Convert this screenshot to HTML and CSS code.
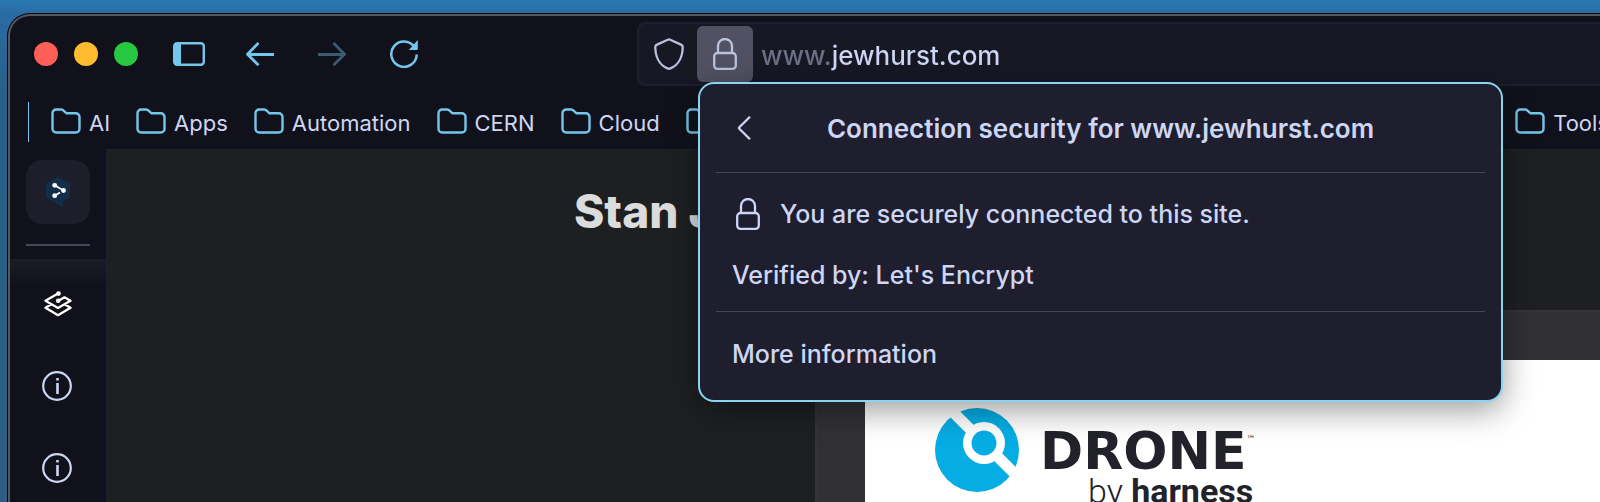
FILE: index.html
```html
<!DOCTYPE html>
<html lang="en">
<head>
<meta charset="utf-8">
<title>www.jewhurst.com</title>
<link rel="stylesheet" href="styles.css">
</head>
<body>
<svg class="symbols" aria-hidden="true">
  <symbol id="folder" viewBox="0 0 30 26"><path d="M1.500 5.200V20.800a3.700 3.700 0 0 0 3.700 3.700h19.600a3.700 3.700 0 0 0 3.700-3.700V9a3.700 3.700 0 0 0-3.700-3.700H15.500L12.600 2.600a3.500 3.500 0 0 0-2.400-1.100H5.200a3.700 3.700 0 0 0-3.700 3.700z" fill="none" stroke="currentColor" stroke-width="2.400"/></symbol>
  <symbol id="lock" viewBox="0 0 24 32"><path d="M5 14V8a7 7 0 0 1 14 0v6M4.500 15h15a3.300 3.300 0 0 1 3.300 3.300v9.200a3.300 3.300 0 0 1-3.300 3.300h-15a3.300 3.300 0 0 1-3.300-3.300v-9.200A3.300 3.300 0 0 1 4.500 15z" fill="none" stroke="currentColor" stroke-width="2.300"/></symbol>
  <symbol id="info" viewBox="0 0 30 30"><circle cx="15" cy="15" r="13.800" fill="none" stroke="currentColor" stroke-width="2.200"/><path d="M15.500 12v11M15.500 7v2.500" stroke="currentColor" stroke-width="2.600"/></symbol>
</svg>
<div class="window">
  <header class="toolbar">
    <div class="lights">
      <button class="light close" aria-label="Close"></button>
      <button class="light minimize" aria-label="Minimize"></button>
      <button class="light zoom" aria-label="Zoom"></button>
    </div>
    <nav class="controls" aria-label="Navigation">
      <button class="icon-button sidebar-toggle" aria-label="Toggle sidebar"><svg width="32" height="24" viewBox="0 0 32 24"><rect x="1.200" y="1.200" width="29.600" height="21.600" rx="3" fill="none" stroke="currentColor" stroke-width="2.400"/><path d="M2 2h6v20H2z" fill="currentColor"/></svg></button>
      <button class="icon-button" aria-label="Back"><svg width="28" height="24" viewBox="0 0 28 24"><path d="M28 12.500H2M12.500 1L1.500 12.200l11 11" fill="none" stroke="currentColor" stroke-width="2.800"/></svg></button>
      <button class="icon-button" aria-label="Forward" disabled><svg width="28" height="24" viewBox="0 0 28 24"><path d="M0 12.500h26M15.500 1l11 11.200-11 11" fill="none" stroke="currentColor" stroke-width="2.800"/></svg></button>
      <button class="icon-button" aria-label="Reload"><svg width="28" height="28" viewBox="0 0 28 28"><path d="M24.500 7A12.700 12.700 0 1 0 26.700 14.500" fill="none" stroke="currentColor" stroke-width="2.500"/><path d="M27.800 0v8.500a1.500 1.500 0 0 1-1.500 1.500h-7.500z" fill="currentColor"/></svg></button>
    </nav>
    <div class="address">
      <button class="shield" aria-label="Tracking protection"><svg width="30" height="32" viewBox="0 0 30 32"><path d="M13.800 1.700L3 6.600A2.700 2.700 0 0 0 1.300 9.200C1.400 18 5 27 13.500 30.400a3.500 3.500 0 0 0 3 0C25 27 28.600 18 28.700 9.200A2.700 2.700 0 0 0 27 6.600L16.200 1.700a3 3 0 0 0-2.400 0z" fill="none" stroke="currentColor" stroke-width="2.300"/></svg></button>
      <button class="identity" aria-label="Connection security" aria-expanded="true"><svg width="24" height="32"><use href="#lock"/></svg></button>
      <input class="url" type="text" value="www.jewhurst.com" aria-label="Address">
      <section class="popup" aria-labelledby="popup-title">
        <header class="popup-head">
          <button class="popup-back" aria-label="Back to site information"><svg width="14" height="24" viewBox="0 0 14 24"><path d="M13 .8L2.300 11.300a1 1 0 0 0 0 1.400L13 23.200" fill="none" stroke="currentColor" stroke-width="2.300"/></svg></button>
          <h2 id="popup-title">Connection security for www.jewhurst.com</h2>
        </header>
        <div class="popup-body">
          <p class="secure"><svg width="24" height="32"><use href="#lock"/></svg>You are securely connected to this site.</p>
          <p>Verified by: Let's Encrypt</p>
        </div>
        <button class="more">More information</button>
      </section>
    </div>
  </header>
  <nav class="bookmarks" aria-label="Bookmarks">
    <a href="#"><svg width="30" height="26"><use href="#folder"/></svg>AI</a>
    <a href="#"><svg width="30" height="26"><use href="#folder"/></svg>Apps</a>
    <a href="#"><svg width="30" height="26"><use href="#folder"/></svg>Automation</a>
    <a href="#"><svg width="30" height="26"><use href="#folder"/></svg>CERN</a>
    <a href="#"><svg width="30" height="26"><use href="#folder"/></svg>Cloud</a>
    <a href="#" aria-label="Folder"><svg width="30" height="26"><use href="#folder"/></svg></a>
    <a class="last" href="#"><svg width="30" height="26"><use href="#folder"/></svg>Tools</a>
  </nav>
  <div class="workspace">
    <aside class="sidebar">
      <button class="pinned" aria-label="Translator"><svg width="24" height="30" viewBox="0 0 24 30"><path d="M12 0l12 6.500v14L17 24.500V30l-5.500-3L0 20.500v-14z" fill="#122e48"/><path d="M9 8.500l8.500 5M9 18.500l5-3" stroke="#fff" stroke-width="1.700"/><circle cx="8.700" cy="8.300" r="2.400" fill="#fff"/><circle cx="17.500" cy="13.500" r="2.400" fill="#fff"/><circle cx="8.700" cy="18.700" r="2.400" fill="#fff"/></svg></button>
      <hr>
      <div class="tabs">
        <button class="layers" aria-label="Layers"><svg width="28" height="26" viewBox="0 0 28 26"><path d="M14 2.600L1.500 9.800 14 17l12.500-7.200L20.500 6.300 14.500 9.800M7 13.500l-5.500 3.300L14 24.200l12.500-7.400L21 13.500" fill="none" stroke="currentColor" stroke-width="2.300" stroke-linejoin="round"/><circle cx="14.500" cy="2.600" r="2.300" fill="currentColor"/><circle cx="14.200" cy="9.800" r="2.300" fill="currentColor"/></svg></button>
        <button aria-label="Tab"><svg width="30" height="30"><use href="#info"/></svg></button>
        <button aria-label="Tab"><svg width="30" height="30"><use href="#info"/></svg></button>
      </div>
    </aside>
    <main class="page">
      <h1>Stan Jewhurst</h1>
      <article class="card">
        <div class="card-image">
          <svg class="drone" width="84" height="84" viewBox="0 0 84 84"><circle cx="42" cy="42" r="42" fill="#06ade4"/><path d="M11-3l76 76" stroke="#fff" stroke-width="11"/><circle cx="49" cy="35" r="21" fill="#fff"/><circle cx="49" cy="35" r="12.500" fill="#06ade4"/></svg>
          <div class="wordmark">
            <div class="name">DRONE<sup>™</sup></div>
            <div class="by">by <b>harness</b></div>
          </div>
        </div>
      </article>
    </main>
  </div>
</div>
</body>
</html>
```
FILE: styles.css
```css
* { box-sizing: border-box; }
body {
  margin: 0;
  height: 100vh;
  padding: 14px 0 0 8px;
  overflow: hidden;
  background: linear-gradient(#2a79b3, #296ca2 14px, #295f8a 90px, #2d5f82);
  color: #cdd6f4;
  font-family: Inter, "Liberation Sans", sans-serif;
}
button {
  display: flex;
  align-items: center;
  justify-content: center;
  padding: 0;
  border: 0;
  background: none;
  color: inherit;
  font: inherit;
}
svg { display: block; flex: none; }
h1, h2, p { margin: 0; }
.symbols { position: absolute; width: 0; height: 0; }

.window {
  display: flex;
  flex-direction: column;
  height: 100%;
  border: solid #53575f;
  border-width: 2px 0 0 2px;
  border-top-left-radius: 22px;
  background: #11111b;
  box-shadow: 0 0 0 1px #05070c;
}

.toolbar { display: flex; align-items: center; flex: none; padding-top: 6px; }
.lights { display: flex; gap: 16px; margin-left: 24px; }
.light { width: 24px; height: 24px; border-radius: 50%; }
.close { background: #ff5f57; }
.minimize { background: #febc2e; }
.zoom { background: #28c840; }
.controls { display: flex; margin: 0 197px 0 15px; color: #74c7ec; }
.icon-button { width: 72px; height: 64px; }
.sidebar-toggle { width: 71px; }
.icon-button:disabled { color: #3a5b72; }

.address {
  position: relative;
  display: flex;
  flex: 1;
  align-items: center;
  height: 64px;
  border: solid #1e1e2e;
  border-width: 2px 0 2px 2px;
  border-radius: 8px 0 0 8px;
  background: #181825;
}
.shield, .identity { flex: none; width: 58px; height: 56px; }
.shield { padding-left: 2px; color: #bac2de; }
.identity { width: 56px; border-radius: 6px; background: #515163; color: #bac2de; }
.url {
  flex: 1;
  min-width: 0;
  padding: 3px 8px 0;
  border: 0;
  outline: 0;
  background: linear-gradient(90deg, #6c7086 77px, #cdd6f4 77px);
  background-clip: text;
  color: transparent;
  font: 500 26px/36px Inter, "Liberation Sans", sans-serif;
}

.popup {
  position: absolute;
  z-index: 2;
  top: 58px;
  left: 59px;
  width: 805px;
  padding: 0 16px;
  border: 2px solid #89d3f3;
  border-radius: 16px;
  background: #1e1e2e;
  box-shadow: 0 8px 32px rgba(0, 0, 0, .4);
  font-size: 25px;
  font-weight: 500;
  line-height: 32px;
}
.popup-head {
  display: flex;
  align-items: center;
  height: 89px;
  padding: 0 16px;
  border-bottom: 1px solid #45475a;
}
.popup-back { width: 24px; height: 32px; }
.popup-head h2 {
  flex: 1;
  padding: 2px 24px 0 0;
  font-size: 26px;
  font-weight: 600;
  text-align: center;
}
.popup-body { padding: 25px 16px 20px; border-bottom: 1px solid #45475a; }
.popup-body p + p { margin-top: 29px; }
.secure { display: flex; gap: 20px; padding-left: 4px; }
.more { justify-content: flex-start; width: 100%; height: 88px; padding: 0 16px 5px; }

.bookmarks {
  display: flex;
  align-items: center;
  flex: none;
  gap: 26px;
  height: 40px;
  margin: 16px 0 7px 18px;
  padding: 2px 0 0 22px;
  border-left: 1px solid #74c7ec;
  overflow: hidden;
}
.bookmarks a {
  display: flex;
  align-items: center;
  flex: none;
  gap: 8px;
  color: inherit;
  font-size: 22px;
  line-height: 36px;
  text-decoration: none;
}
.bookmarks svg { margin-bottom: 5px; color: #74c7ec; }
.bookmarks .last { margin: 0 -24px 0 auto; padding-right: 15px; }

.workspace { display: flex; flex: 1; min-height: 0; }
.sidebar { flex: none; width: 96px; padding-top: 11px; }
.pinned { width: 64px; height: 64px; margin: 0 16px; border-radius: 16px; background: #1e1e2b; }
.sidebar hr { height: 2px; margin: 20px 16px 13px; border: 0; background: #45475a; }
.tabs { padding-top: 4px; background: linear-gradient(#1c1c27, #11111b 28px); }
.tabs button { width: 94px; height: 82px; }
.tabs .layers { width: 96px; color: #fff; }
.page {
  flex: 1;
  min-width: 0;
  overflow: hidden;
  border: solid #1e1e2e;
  border-width: 1px 0 0 1px;
  background: #1e1f21;
}
.page h1 {
  padding: 32px 0 70px 467px;
  color: #dcdcdc;
  font-size: 46px;
  font-weight: 800;
  line-height: 58px;
}
.card {
  margin-left: 708px;
  padding: 48px 0 0 48px;
  border: solid #343336;
  border-width: 2px 0 0 2px;
  background: #313035;
}
.card-image {
  display: flex;
  gap: 21px;
  height: 400px;
  padding: 48px 0 0 70px;
  background: #fff;
  color: #22222b;
}
.wordmark { padding-top: 17px; }
.name {
  display: flex;
  font-family: "DejaVu Sans", sans-serif;
  font-size: 52px;
  font-weight: 700;
  line-height: 52px;
}
.name sup { padding-top: 8px; font-size: 9px; font-weight: 400; line-height: 12px; }
.by {
  padding-left: 48px;
  font-family: Roboto, sans-serif;
  font-size: 34px;
  font-weight: 300;
  line-height: 28px;
}
.by b { font-weight: 700; }
```
